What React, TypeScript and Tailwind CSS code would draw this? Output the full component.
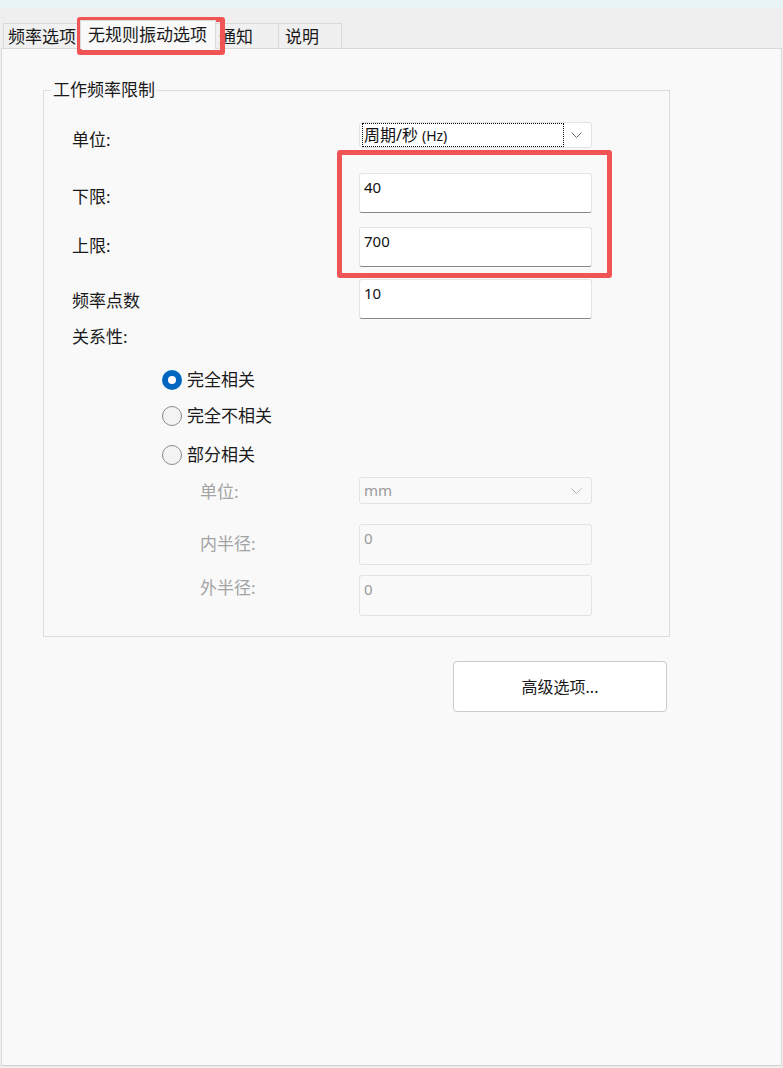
import React from 'react';

const font = "font-['Noto_Sans','Noto_Sans_CJK_SC',sans-serif]";

const Chevron: React.FC<{ color: string }> = ({ color }) => (
    <svg width="11" height="6" viewBox="0 0 11 6" fill="none">
        <polyline points="0.5,0.5 5.5,5.5 10.5,0.5" stroke={color} strokeWidth="1" />
    </svg>
);

const TextBox: React.FC<{ value: string; disabled?: boolean; h: string }> = ({ value, disabled, h }) => (
    <div
        className={`w-[233px] ${h} rounded-[3px] border px-[4px] pt-[3px] text-[15px] leading-[20px] ${
            disabled
                ? 'border-[#e3e3e3] bg-[#f9f9f9] text-[#9a9a9a]'
                : 'border-[#e4e4e4] border-b-[#878787] bg-white text-[#111]'
        }`}
    >
        {value}
    </div>
);

const Radio: React.FC<{ label: string; checked?: boolean; className?: string }> = ({ label, checked, className }) => (
    <div className={`flex h-[24px] items-center gap-[5px] pl-[118px] ${className ?? ''}`}>
        {checked ? (
            <span className="flex h-[20px] w-[20px] items-center justify-center rounded-full bg-[#0067c0]">
                <span className="h-[8px] w-[8px] rounded-full bg-white" />
            </span>
        ) : (
            <span className="h-[20px] w-[20px] rounded-full border border-[#8a8a8a] bg-[#f3f3f3]" />
        )}
        <span className="text-[17px] leading-[24px] text-[#1a1a1a]">{label}</span>
    </div>
);

const Row: React.FC<{ label: string; off: string; indent?: boolean; disabled?: boolean; className?: string; children: React.ReactNode }> = ({
    label,
    off,
    indent,
    disabled,
    className,
    children,
}) => (
    <div className={`flex ${className ?? ''}`}>
        <div
            className={`w-[315px] ${indent ? 'pl-[156px]' : 'pl-[28px]'} ${off} text-[17px] leading-[24px] ${
                disabled ? 'text-[#a3a3a3]' : 'text-[#1a1a1a]'
            }`}
        >
            {label}
        </div>
        {children}
    </div>
);

export default function App() {
    return (
        <div className={`relative h-[1068px] w-[783px] overflow-hidden bg-[#efefef] ${font}`}>
            {/* window strip */}
            <div className="h-[8px] bg-[#e9f4f6]" />

            {/* tabs */}
            <div className="flex h-[40px] items-end pl-[3px] text-[17px] leading-[24px] text-[#1a1a1a]">
                <div className="h-[25px] w-[77px] border border-b-0 border-[#dadada] bg-[#f0f0f0] pl-[4px] pt-[1px]">频率选项</div>
                <div className="relative z-10 -mb-[1px] h-[29px] w-[136px] border border-b-0 border-[#dadada] bg-[#f9f9f9] pl-[7px] pt-[2px]">
                    无规则振动选项
                </div>
                <div className="h-[25px] w-[63px] border border-b-0 border-l-0 border-[#dadada] bg-[#f0f0f0] pl-[3px] pt-[1px]">通知</div>
                <div className="h-[25px] w-[63px] border border-b-0 border-l-0 border-[#dadada] bg-[#f0f0f0] pl-[6px] pt-[1px]">说明</div>
            </div>

            {/* panel */}
            <div className="ml-[1px] h-[1018px] w-[781px] border border-[#d9d9d9] border-b-[#cfcfcf] bg-[#f9f9f9]">
                {/* group box */}
                <div className="relative ml-[41px] mt-[41px] h-[547px] w-[627px] border border-[#dcdcdc] pt-[31px]">
                    <span className="absolute -top-[13px] left-[7px] bg-[#f9f9f9] px-[2px] text-[17px] leading-[24px] text-[#1a1a1a]">
                        工作频率限制
                    </span>

                    <Row label="单位:" off="pt-[6px]" className="h-[26px]">
                        <div className="flex h-[26px] w-[233px] shrink-0 items-center justify-between rounded-[3px] border border-[#e2e2e2] bg-white pl-[2px] pr-[9px]">
                            <span className="flex h-[24px] w-[202px] items-center border border-dotted border-[#111] pl-[1px] text-[16px] text-[#111]">
                                周期/秒 <span className="ml-[4px] text-[14px]">(Hz)</span>
                            </span>
                            <Chevron color="#666" />
                        </div>
                    </Row>
                    <Row label="下限:" off="pt-[12px]" className="mt-[25px]">
                        <TextBox value="40" h="h-[40px]" />
                    </Row>
                    <Row label="上限:" off="pt-[7px]" className="mt-[14px]">
                        <TextBox value="700" h="h-[40px]" />
                    </Row>
                    <Row label="频率点数" off="pt-[10px]" className="mt-[12px]">
                        <TextBox value="10" h="h-[40px]" />
                    </Row>
                    <div className="mt-[6px] pl-[28px] text-[17px] leading-[24px] text-[#1a1a1a]">关系性:</div>

                    <Radio label="完全相关" checked className="mt-[19px]" />
                    <Radio label="完全不相关" className="mt-[12px]" />
                    <Radio label="部分相关" className="mt-[15px]" />

                    <Row label="单位:" off="pt-[3px]" indent disabled className="mt-[10px] h-[27px]">
                        <div className="flex h-[27px] w-[233px] items-center justify-between rounded-[3px] border border-[#e3e3e3] bg-[#f9f9f9] pl-[4px] pr-[9px] text-[15px] text-[#9a9a9a]">
                            mm
                            <Chevron color="#b5b5b5" />
                        </div>
                    </Row>
                    <Row label="内半径:" off="pt-[8px]" indent disabled className="mt-[20px]">
                        <TextBox value="0" h="h-[41px]" disabled />
                    </Row>
                    <Row label="外半径:" off="pt-[1px]" indent disabled className="mt-[10px]">
                        <TextBox value="0" h="h-[41px]" disabled />
                    </Row>
                </div>

                <button className="ml-[451px] mt-[24px] flex h-[51px] w-[214px] items-center justify-center rounded-[4px] border border-[#cbcbcb] bg-white text-[16px] text-[#1a1a1a]">
                    高级选项...
                </button>
            </div>

            {/* annotation highlights */}
            <div className="pointer-events-none absolute left-[77px] top-[17px] h-[38px] w-[148px] rounded-[3px] border-[5px] border-[#f05455]" />
            <div className="pointer-events-none absolute left-[337px] top-[150px] h-[128px] w-[275px] rounded-[3px] border-[5px] border-[#f05455]" />
        </div>
    );
}
